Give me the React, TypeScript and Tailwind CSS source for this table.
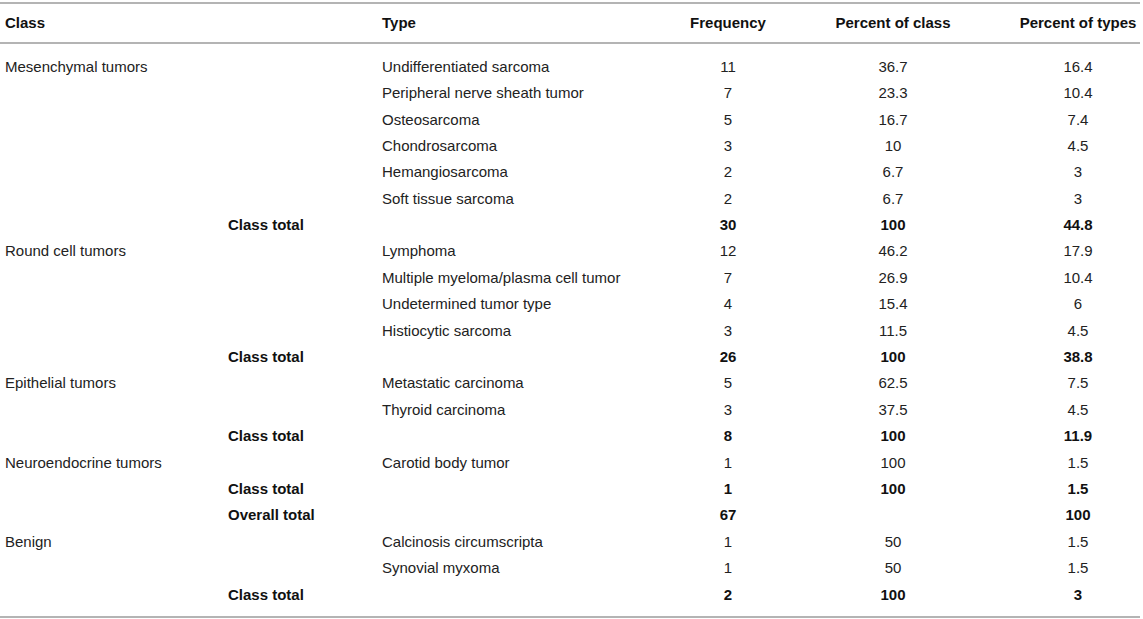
import React from 'react';

type Row = {
  cls?: string;
  total?: string;
  type?: string;
  freq: string;
  pctClass: string;
  pctTypes: string;
};

const rows: Row[] = [
  { cls: 'Mesenchymal tumors', type: 'Undifferentiated sarcoma', freq: '11', pctClass: '36.7', pctTypes: '16.4' },
  { type: 'Peripheral nerve sheath tumor', freq: '7', pctClass: '23.3', pctTypes: '10.4' },
  { type: 'Osteosarcoma', freq: '5', pctClass: '16.7', pctTypes: '7.4' },
  { type: 'Chondrosarcoma', freq: '3', pctClass: '10', pctTypes: '4.5' },
  { type: 'Hemangiosarcoma', freq: '2', pctClass: '6.7', pctTypes: '3' },
  { type: 'Soft tissue sarcoma', freq: '2', pctClass: '6.7', pctTypes: '3' },
  { total: 'Class total', freq: '30', pctClass: '100', pctTypes: '44.8' },
  { cls: 'Round cell tumors', type: 'Lymphoma', freq: '12', pctClass: '46.2', pctTypes: '17.9' },
  { type: 'Multiple myeloma/plasma cell tumor', freq: '7', pctClass: '26.9', pctTypes: '10.4' },
  { type: 'Undetermined tumor type', freq: '4', pctClass: '15.4', pctTypes: '6' },
  { type: 'Histiocytic sarcoma', freq: '3', pctClass: '11.5', pctTypes: '4.5' },
  { total: 'Class total', freq: '26', pctClass: '100', pctTypes: '38.8' },
  { cls: 'Epithelial tumors', type: 'Metastatic carcinoma', freq: '5', pctClass: '62.5', pctTypes: '7.5' },
  { type: 'Thyroid carcinoma', freq: '3', pctClass: '37.5', pctTypes: '4.5' },
  { total: 'Class total', freq: '8', pctClass: '100', pctTypes: '11.9' },
  { cls: 'Neuroendocrine tumors', type: 'Carotid body tumor', freq: '1', pctClass: '100', pctTypes: '1.5' },
  { total: 'Class total', freq: '1', pctClass: '100', pctTypes: '1.5' },
  { total: 'Overall total', freq: '67', pctClass: '', pctTypes: '100' },
  { cls: 'Benign', type: 'Calcinosis circumscripta', freq: '1', pctClass: '50', pctTypes: '1.5' },
  { type: 'Synovial myxoma', freq: '1', pctClass: '50', pctTypes: '1.5' },
  { total: 'Class total', freq: '2', pctClass: '100', pctTypes: '3' },
];

const cols = 'grid grid-cols-[223px_154px_288px_116px_214px_138px] pl-[5px]';

export default function App() {
  return (
    <div
      className="w-[1143px] h-[619px] bg-white text-[15px] text-[#222] overflow-hidden"
      style={{ fontFamily: '"Liberation Sans", Arial, Helvetica, sans-serif' }}
    >
      <div className="w-[1140px] mt-[2px] border-t-2 border-b-2 border-[#b4b4b4]">
        <div className={`${cols} h-[38px] items-center font-bold text-[#111]`}>
          <div>Class</div>
          <div />
          <div>Type</div>
          <div className="text-center">Frequency</div>
          <div className="text-center">Percent of class</div>
          <div className="text-center pl-[18px]">Percent of types</div>
        </div>
      </div>

      <div className="w-[1140px] pt-[9.8px] pb-[8px] border-b-2 border-[#b4b4b4]">
        {rows.map((r, i) => {
          const bold = !!r.total;
          return (
            <div
              key={i}
              className={`${cols} h-[26.4px] items-center ${bold ? 'font-bold text-[#111]' : ''}`}
            >
              <div>{r.cls}</div>
              <div>{r.total}</div>
              <div>{r.type}</div>
              <div className="text-center">{r.freq}</div>
              <div className="text-center">{r.pctClass}</div>
              <div className="text-center pl-[18px]">{r.pctTypes}</div>
            </div>
          );
        })}
      </div>
    </div>
  );
}
